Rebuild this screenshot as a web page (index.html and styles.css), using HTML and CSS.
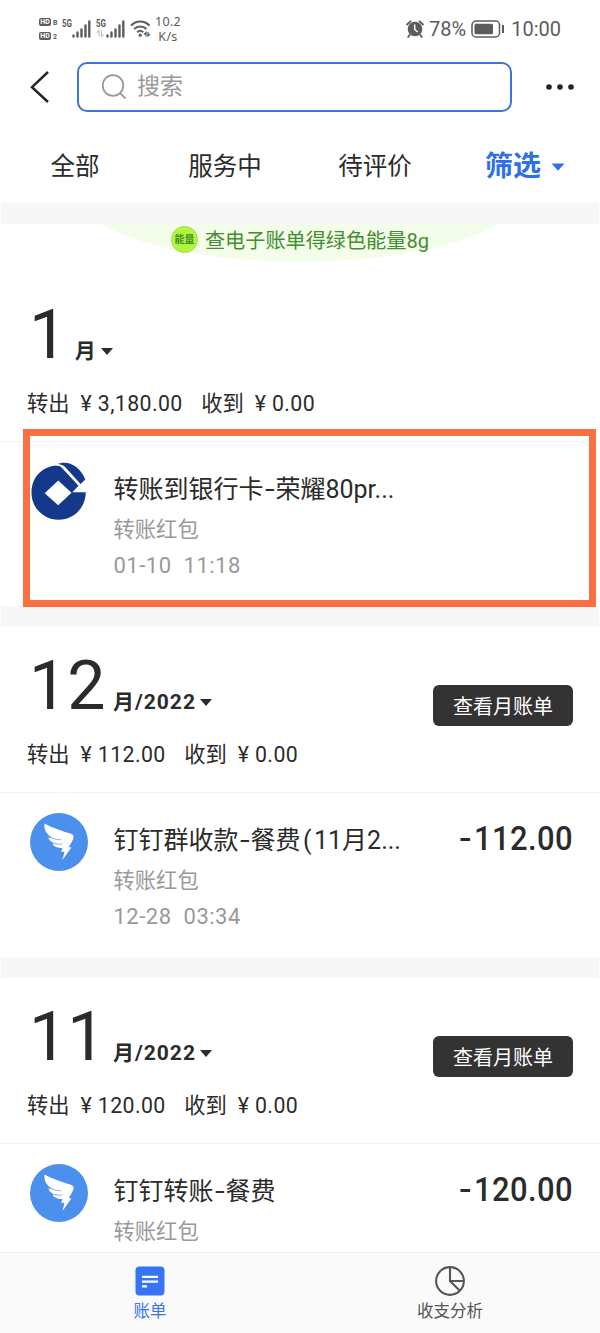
FILE: index.html
```html
<!DOCTYPE html>
<html lang="zh-CN">
<head>
<meta charset="UTF-8">
<meta name="viewport" content="width=device-width, initial-scale=1.0">
<title>账单</title>
<link rel="stylesheet" href="styles.css">
</head>
<body>
<svg class="defs" width="0" height="0">
    <symbol id="wing" viewBox="0 0 58 58">
        <circle cx="29" cy="29" r="29" fill="#4c90ee"/>
        <path fill="#fff" d="M14.500 10.500c8 4.700 18 7.400 26.500 10.300 2.200.9 3 2.200 2.500 4.200-.8 2.900-3 6-4.800 9.300H41.500L32.500 47l2-8.300h-3.400l1.500-3.900c-4.500.8-8.400-.8-10.200-4.200 1.500.4 3 .5 4.500.3-4.500-.9-7.700-3.200-8.600-6.700 1.800.8 3.300 1.100 5 1.100-5.800-2.800-9.500-7.500-8.800-14.800z"/>
        <path fill="none" stroke="#4c90ee" stroke-width=".7" d="M22 25c3 1.300 6 1.700 9 1.700M25 30.800c2.500.5 5 .5 7.500.2"/>
    </symbol>
</svg>
<div class="app">
    <div class="status">
        <div class="status-left">
            <div class="hd">
                <div><b>HD</b><i>B</i></div>
                <div><b>HD</b><i>2</i></div>
            </div>
            <svg class="signal" width="31" height="20" viewBox="0 0 31 20">
                <text x="0" y="8" class="net" textLength="10" lengthAdjust="spacingAndGlyphs">5G</text>
                <path stroke="#5c5c5c" stroke-width="2.400" stroke-linecap="round" d="M11.500 16.500v1M15.500 13.500v4M19.500 10.500v7M23.500 6.500v11M27.300 2.500v15"/>
            </svg>
            <svg class="signal" width="31" height="20" viewBox="0 0 31 20">
                <text x="0" y="8" class="net" textLength="10" lengthAdjust="spacingAndGlyphs">5G</text>
                <path stroke="#c0c0c0" stroke-width="1.200" fill="none" d="M1 13.500l2-2v6M5.500 11.500v6l2-2"/>
                <path stroke="#5c5c5c" stroke-width="2.400" stroke-linecap="round" d="M11.500 16.500v1M15.500 13.500v4M19.500 10.500v7M23.500 6.500v11M27.300 2.500v15"/>
            </svg>
            <svg class="wifi" width="21" height="20" viewBox="0 0 21 20">
                <g fill="none" stroke="#5c5c5c" stroke-width="2">
                    <path d="M1 6.500c5.200-5.500 13.400-5.500 18.600 0M4.200 10c3.500-3.500 8.700-3.500 12.200 0M7.200 13.200c1.800-1.700 4.300-1.700 6.100 0"/>
                    <path stroke-width="1.300" d="M14 15.500l2-2v4M18 13v4l2-2"/>
                </g>
                <circle cx="10.200" cy="16.200" r="1.600" fill="#5c5c5c"/>
            </svg>
            <div class="speed">10.2<br>K/s</div>
        </div>
        <div class="status-right">
            <svg width="18" height="18" viewBox="0 0 18 18">
                <circle cx="9" cy="9" r="7.300" fill="#5c5c5c"/>
                <path fill="none" stroke="#5c5c5c" stroke-width="1.800" stroke-linecap="round" d="M1 4.500L4.500 1.300M17 4.500l-3.500-3.200M3.500 15l-1.300 2M14.500 15l1.300 2"/>
                <path fill="none" stroke="#fff" stroke-width="1.500" d="M8.700 4.500v5l3 2.500"/>
            </svg>
            <span class="percent">78%</span>
            <svg class="battery" width="34" height="18" viewBox="0 0 34 18">
                <rect x="1" y="1" width="27.500" height="16" rx="4" fill="none" stroke="#5c5c5c" stroke-width="1.500"/>
                <rect x="3.500" y="3.700" width="18.500" height="10.600" rx="1.500" fill="#5c5c5c"/>
                <path stroke="#5c5c5c" stroke-width="2" d="M32 5v8"/>
            </svg>
            <span class="clock">10:00</span>
        </div>
    </div>

    <div class="search-row">
        <svg class="back" width="20" height="32" viewBox="0 0 20 32">
            <path fill="none" stroke="#262626" stroke-width="2.500" d="M19 1L3 16.200 19 31"/>
        </svg>
        <div class="search">
            <svg width="26" height="26" viewBox="0 0 26 26">
                <g fill="none" stroke="#999" stroke-width="1.800">
                    <circle cx="11" cy="11.500" r="10.300"/>
                    <path d="M18 19l5.500 5.500"/>
                </g>
            </svg>
            <span>搜索</span>
        </div>
        <svg class="more" width="30" height="8" viewBox="0 0 30 8">
            <circle cx="4" cy="4" r="2.800"/><circle cx="15" cy="4" r="2.800"/><circle cx="26" cy="4" r="2.800"/>
        </svg>
    </div>

    <div class="tabs">
        <span>全部</span>
        <span>服务中</span>
        <span>待评价</span>
        <span class="filter">筛选<svg width="14" height="8" viewBox="0 0 14 8"><path fill="#2f6fea" d="M.5.500h13L7 7.800z"/></svg></span>
    </div>

    <div class="gap"></div>

    <div class="month first">
        <div class="banner">
            <span class="energy">能量</span>
            <span>查电子账单得绿色能量8g</span>
        </div>
        <div class="month-head">
            <div class="date"><span class="num">1</span><span class="year">月</span><i class="caret"></i></div>
            <div class="summary"><span>转出</span><span class="yen">¥</span><span class="sum">3,180.00</span><span>收到</span><span class="yen">¥</span><span class="sum">0.00</span></div>
        </div>
        <div class="item">
            <svg class="icon" width="58" height="60" viewBox="0 0 58 60">
                <path fill="#14398b" d="M26.700 3.400C12 4 1.500 15.500 1.500 30.500 1.500 46 13.500 57.700 28.500 57.700c15 0 27-11.500 27.300-27.400H42.300l6.200-6.500L33 7c-1.700-2.200-3.300-3.700-6.300-3.600z"/>
                <path fill="#14398b" d="M26.700 2.300C37-2.500 50 3.500 55.300 17.500L50.500 22 36 6c-2.500-3-5.500-3.700-9.300-3.700z"/>
                <path fill="none" stroke="#fff" stroke-width="1.600" d="M25.500 2.800c5-.2 7 1.100 9 3.500L50.200 23.500"/>
                <path fill="#fff" d="M28.200 18.500L41.500 30.700 28.200 43.300 14.700 31.200z"/>
            </svg>
            <div class="info">
                <div class="title">转账到银行卡<em class="dash">-</em>荣耀80pr...</div>
                <div class="type">转账红包</div>
                <div class="time"><span>01-10</span><span>11:18</span></div>
            </div>
        </div>
        <div class="highlight"></div>
    </div>

    <div class="gap"></div>

    <div class="month">
        <div class="month-head">
            <div class="date"><span class="num">12</span><span class="year">月/2022</span><i class="caret"></i></div>
            <div class="summary"><span>转出</span><span class="yen">¥</span><span class="sum">112.00</span><span>收到</span><span class="yen">¥</span><span class="sum">0.00</span></div>
            <a class="bill-btn">查看月账单</a>
        </div>
        <div class="item">
            <svg class="icon" width="58" height="58"><use href="#wing"/></svg>
            <div class="info">
                <div class="title">钉钉群收款<em class="dash">-</em>餐费<em>(</em>11月2...</div>
                <div class="type">转账红包</div>
                <div class="time"><span>12-28</span><span>03:34</span></div>
            </div>
            <div class="amount"><em class="dash">-</em>112.00</div>
        </div>
    </div>

    <div class="gap"></div>

    <div class="month">
        <div class="month-head">
            <div class="date"><span class="num">11</span><span class="year">月/2022</span><i class="caret"></i></div>
            <div class="summary"><span>转出</span><span class="yen">¥</span><span class="sum">120.00</span><span>收到</span><span class="yen">¥</span><span class="sum">0.00</span></div>
            <a class="bill-btn">查看月账单</a>
        </div>
        <div class="item">
            <svg class="icon" width="58" height="58"><use href="#wing"/></svg>
            <div class="info">
                <div class="title">钉钉转账<em class="dash">-</em>餐费</div>
                <div class="type">转账红包</div>
            </div>
            <div class="amount"><em class="dash">-</em>120.00</div>
        </div>
    </div>

    <div class="footer">
        <div class="nav active">
            <svg width="30" height="30" viewBox="0 0 30 30">
                <rect x=".5" y=".5" width="29" height="29" rx="4" fill="#3774f5"/>
                <path stroke="#fff" stroke-width="2.200" d="M7 10.800h16M7 15.600h16M7 20.400h5"/>
            </svg>
            <span>账单</span>
        </div>
        <div class="nav">
            <svg width="32" height="32" viewBox="0 0 32 32">
                <g fill="none" stroke="#555" stroke-width="2.200">
                    <circle cx="16" cy="16" r="14.800"/>
                    <path d="M16 1v15h15M16 16l10.500 10.500"/>
                </g>
            </svg>
            <span>收支分析</span>
        </div>
    </div>
</div>
</body>
</html>
```

FILE: styles.css
```css
* {
    box-sizing: border-box;
}
body {
    margin: 0;
    font-family: Roboto, "Noto Sans CJK SC", sans-serif;
    color: #2b2b2b;
    background: #fff;
}
i, em {
    font-style: normal;
}
svg {
    display: block;
    flex: none;
}
.defs {
    display: none;
}
.app {
    width: 600px;
    height: 1333px;
    display: flex;
    flex-direction: column;
    overflow: hidden;
}

/* status bar */
.status {
    height: 62px;
    flex: none;
    display: flex;
    justify-content: space-between;
    padding: 12px 39px 0 39px;
    color: #5c5c5c;
}
.status-left, .status-right {
    display: flex;
    align-items: center;
    height: 34px;
}
.hd {
    width: 23px;
    display: flex;
    flex-direction: column;
    gap: 6px;
}
.hd div {
    display: flex;
    align-items: flex-end;
    gap: 2px;
    height: 8px;
}
.hd b {
    width: 12px;
    height: 8px;
    border-radius: 2px;
    background: #5c5c5c;
    color: #fff;
    font-size: 7px;
    line-height: 8px;
    text-align: center;
}
.hd i {
    font-size: 7px;
    font-weight: bold;
    line-height: 6px;
}
.signal {
    margin-right: 3px;
}
.net {
    font-family: Roboto, sans-serif;
    font-size: 10px;
    font-weight: bold;
    fill: #5c5c5c;
}
.wifi {
    margin-right: 2px;
}
.speed {
    width: 30px;
    font-family: "Noto Sans", sans-serif;
    font-size: 12.500px;
    line-height: 15px;
    letter-spacing: 0.300px;
    text-align: center;
    white-space: nowrap;
}
.percent {
    margin: 0 5px 0 5px;
    font-size: 20px;
}
.battery {
    margin-right: 6px;
}
.clock {
    font-size: 20px;
}

/* search */
.search-row {
    height: 50px;
    flex: none;
    display: flex;
    align-items: center;
    padding: 0 25px 0 29px;
}
.search {
    width: 435px;
    height: 50px;
    margin-left: 28px;
    padding-left: 23px;
    border: 2px solid #3c74dc;
    border-radius: 10px;
    display: flex;
    align-items: center;
    gap: 9px;
    font-size: 23px;
    line-height: 46px;
    color: #999;
}
.more {
    margin-left: auto;
    fill: #262626;
}

/* tabs */
.tabs {
    height: 91px;
    flex: none;
    display: grid;
    grid-template-columns: repeat(4, 1fr);
    text-align: center;
    font-size: 24.500px;
    line-height: 109px;
}
.filter {
    display: flex;
    align-items: center;
    justify-content: center;
    gap: 10px;
    height: 109px;
    font-size: 28px;
    font-weight: bold;
    color: #2f6fea;
}

.gap {
    height: 20.500px;
    flex: none;
    margin: 0 1px;
    background: #f7f7f7;
}

/* month block */
.month {
    position: relative;
    height: 330.500px;
    flex: none;
}
.first {
    height: 382.500px;
}
.banner {
    height: 52px;
    display: flex;
    justify-content: center;
    gap: 7px;
    background: radial-gradient(ellipse 222px 68px at 300px -30px, #f3fdea 99%, #fff 100%);
    color: #438e2e;
    font-size: 20.150px;
    line-height: 34px;
}
.energy {
    width: 27px;
    height: 27px;
    margin-top: 2px;
    border-radius: 50%;
    border: 1px solid #8fdc3a;
    background: radial-gradient(circle, #b0f43b 55%, #cdfa6a);
    font-size: 10px;
    font-weight: bold;
    line-height: 25px;
    text-align: center;
}
.month-head {
    position: relative;
    height: 166px;
    padding: 19px 27px 0;
    border-bottom: 1px solid #f3f3f3;
}
.date {
    display: flex;
    align-items: baseline;
    height: 80px;
    line-height: 80px;
}
.num {
    margin-left: 2px;
    font-size: 68px;
}
.year {
    margin-left: 7.500px;
    font-size: 21px;
    font-weight: bold;
    letter-spacing: 1px;
}
.caret {
    margin: 0 0 3px 4px;
    border: 6px solid transparent;
    border-top: 7px solid #2b2b2b;
    border-bottom: 0;
    transform: translateY(-3px);
}
.summary {
    display: flex;
    margin-top: 14px;
    font-size: 21.300px;
    line-height: 30px;
}
.yen {
    margin: 0 6px 0 11px;
}
.sum {
    margin-right: 18.500px;
    letter-spacing: 0.400px;
}
.bill-btn {
    position: absolute;
    right: 27px;
    top: 58px;
    width: 140px;
    height: 41px;
    border-radius: 6px;
    background: #333;
    color: #fff;
    font-size: 20px;
    line-height: 44px;
    text-align: center;
}

/* bill item */
.item {
    display: flex;
    padding: 20px 27px 0 30px;
}
.info {
    margin-left: 25.500px;
    flex: 1;
    white-space: nowrap;
}
.title {
    height: 47px;
    font-size: 25px;
    line-height: 55px;
}
.title em {
    padding: 0 2.500px;
}
.dash {
    display: inline-block;
    transform: scaleX(1.4);
}
.type {
    font-size: 21.300px;
    line-height: 42px;
    height: 39px;
    color: #999;
}
.time {
    display: flex;
    gap: 12px;
    color: #999;
    font-size: 22px;
    line-height: 35px;
    letter-spacing: 0.500px;
}
.amount {
    font-size: 34px;
    font-weight: 500;
    line-height: 50px;
    letter-spacing: 0.500px;
    transform: scaleX(0.91);
    transform-origin: right;
}
.amount .dash {
    margin-right: 3px;
    transform: scaleX(1.2);
}
.highlight {
    position: absolute;
    left: 23px;
    top: 205px;
    width: 573px;
    height: 178px;
    border: 7px solid #fb6f43;
}

/* bottom nav */
.footer {
    position: relative;
    z-index: 1;
    height: 81px;
    flex: none;
    margin-top: auto;
    border-top: 1px solid #f1f1f1;
    display: flex;
    background: #fafafa;
}
.month:nth-last-child(2) {
    height: auto;
    flex: 1 1 0;
    min-height: 0;
    overflow: hidden;
}
.nav {
    flex: 1;
    display: flex;
    flex-direction: column;
    align-items: center;
    padding-top: 13px;
    font-size: 16.500px;
    color: #555;
}
.nav svg {
    height: 30px;
}
.nav span {
    line-height: 32px;
}
.active {
    color: #3774f5;
}
```
